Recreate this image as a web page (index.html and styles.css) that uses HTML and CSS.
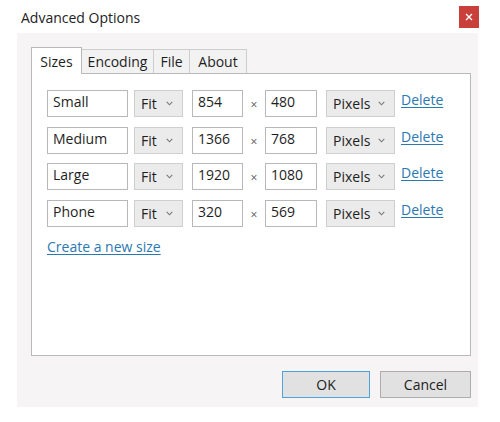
FILE: index.html
```html
<!DOCTYPE html>
<html>
<head>
<meta charset="utf-8">
<link rel="stylesheet" href="styles.css">
</head>
<body>
<div class="window">
  <div class="titlebar">
    <span class="title">Advanced Options</span>
    <span class="close"><svg width="8" height="8" viewBox="0 0 8 8"><path d="M1 1L7 7M7 1L1 7" stroke="#fff" stroke-width="1.4"/></svg></span>
  </div>
  <div class="dialog">
    <div class="tabs">
      <div class="tab tab-sizes active">Sizes</div>
      <div class="tab tab-encoding">Encoding</div>
      <div class="tab tab-file">File</div>
      <div class="tab tab-about">About</div>
    </div>
    <div class="panel">
      <div class="row">
        <div class="field f-name">Small</div>
        <div class="select s-fit"><span>Fit</span><svg class="chev" width="7" height="5" viewBox="0 0 7 5"><path d="M0.7 0.8L3.5 3.8L6.3 0.8" fill="none" stroke="#777" stroke-width="1.1"/></svg></div>
        <div class="field f-w">854</div>
        <div class="times">×</div>
        <div class="field f-h">480</div>
        <div class="select s-unit"><span>Pixels</span><svg class="chev" width="7" height="5" viewBox="0 0 7 5"><path d="M0.7 0.8L3.5 3.8L6.3 0.8" fill="none" stroke="#777" stroke-width="1.1"/></svg></div>
        <a class="link del">Delete</a>
      </div>
      <div class="row">
        <div class="field f-name">Medium</div>
        <div class="select s-fit"><span>Fit</span><svg class="chev" width="7" height="5" viewBox="0 0 7 5"><path d="M0.7 0.8L3.5 3.8L6.3 0.8" fill="none" stroke="#777" stroke-width="1.1"/></svg></div>
        <div class="field f-w">1366</div>
        <div class="times">×</div>
        <div class="field f-h">768</div>
        <div class="select s-unit"><span>Pixels</span><svg class="chev" width="7" height="5" viewBox="0 0 7 5"><path d="M0.7 0.8L3.5 3.8L6.3 0.8" fill="none" stroke="#777" stroke-width="1.1"/></svg></div>
        <a class="link del">Delete</a>
      </div>
      <div class="row">
        <div class="field f-name">Large</div>
        <div class="select s-fit"><span>Fit</span><svg class="chev" width="7" height="5" viewBox="0 0 7 5"><path d="M0.7 0.8L3.5 3.8L6.3 0.8" fill="none" stroke="#777" stroke-width="1.1"/></svg></div>
        <div class="field f-w">1920</div>
        <div class="times">×</div>
        <div class="field f-h">1080</div>
        <div class="select s-unit"><span>Pixels</span><svg class="chev" width="7" height="5" viewBox="0 0 7 5"><path d="M0.7 0.8L3.5 3.8L6.3 0.8" fill="none" stroke="#777" stroke-width="1.1"/></svg></div>
        <a class="link del">Delete</a>
      </div>
      <div class="row">
        <div class="field f-name">Phone</div>
        <div class="select s-fit"><span>Fit</span><svg class="chev" width="7" height="5" viewBox="0 0 7 5"><path d="M0.7 0.8L3.5 3.8L6.3 0.8" fill="none" stroke="#777" stroke-width="1.1"/></svg></div>
        <div class="field f-w">320</div>
        <div class="times">×</div>
        <div class="field f-h">569</div>
        <div class="select s-unit"><span>Pixels</span><svg class="chev" width="7" height="5" viewBox="0 0 7 5"><path d="M0.7 0.8L3.5 3.8L6.3 0.8" fill="none" stroke="#777" stroke-width="1.1"/></svg></div>
        <a class="link del">Delete</a>
      </div>
      <a class="link create">Create a new size</a>
    </div>
    <div class="buttons">
      <div class="btn btn-ok">OK</div>
      <div class="btn btn-cancel">Cancel</div>
    </div>
  </div>
</div>
</body>
</html>
```
FILE: styles.css
```css
html, body {
  margin: 0;
  padding: 0;
  background: #ffffff;
}
body {
  width: 500px;
  height: 422px;
  overflow: hidden;
  font-family: "Open Sans", "Noto Sans", sans-serif;
  font-size: 14px;
  color: #1e1e1e;
}
.window {
  display: flex;
  flex-direction: column;
}
.titlebar {
  height: 33px;
  display: flex;
  align-items: flex-start;
}
.title {
  padding-left: 21px;
  padding-top: 8px;
  line-height: 19px;
  font-size: 14px;
  color: #222;
}
.close {
  margin-left: auto;
  margin-right: 21px;
  margin-top: 6px;
  width: 20px;
  height: 22px;
  background: #c9403b;
  display: flex;
  align-items: center;
  justify-content: center;
}
.dialog {
  margin-left: 17px;
  width: 461px;
  height: 374px;
  box-sizing: border-box;
  padding: 14px 7px 0 14px;
  background: #f7f4f5;
  display: flex;
  flex-direction: column;
}
.tabs {
  height: 26px;
  display: flex;
  align-items: flex-end;
}
.tab {
  box-sizing: border-box;
  height: 24px;
  border: 1px solid #cdcdcd;
  border-bottom: none;
  margin-left: -1px;
  background: #f2f2f2;
  text-align: center;
  line-height: 19px;
  padding-top: 2px;
  font-size: 14px;
}
.tab-sizes { width: 51px; margin-left: 0; }
.tab-encoding { width: 73px; }
.tab-file { width: 37px; }
.tab-about { width: 58px; }
.tab.active {
  height: 27px;
  margin-bottom: -1px;
  background: #ffffff;
  border-color: #b9b9b9;
  padding-top: 4px;
  position: relative;
  z-index: 1;
}
.panel {
  box-sizing: border-box;
  height: 283px;
  width: 440px;
  border: 1px solid #b9b9b9;
  background: #ffffff;
  padding: 16px 15px 0 15px;
  display: flex;
  flex-direction: column;
  align-items: flex-start;
  gap: 9.5px;
}
.row {
  display: flex;
  align-items: flex-start;
  height: 27px;
}
.field {
  box-sizing: border-box;
  height: 27px;
  border: 1px solid #b8b8b8;
  background: #fff;
  padding: 2px 0 0 5px;
  line-height: 18px;
  white-space: nowrap;
}
.f-name { width: 81px; margin-right: 6px; }
.f-w { width: 51px; }
.f-h { width: 52px; margin-right: 9px; }
.select {
  box-sizing: border-box;
  height: 27px;
  border: 1px solid #cfcfcf;
  background: #ebebeb;
  display: flex;
  align-items: flex-start;
  padding: 4px 0 0 6px;
  line-height: 18px;
}
.select .chev {
  margin-left: auto;
  margin-right: 9px;
  margin-top: 6px;
}
.s-fit { width: 49px; margin-right: 9px; }
.s-unit { width: 69px; margin-right: 6px; }
.times {
  width: 22px;
  text-align: center;
  font-size: 12px;
  color: #555;
  padding-top: 7px;
  line-height: 16px;
}
.link {
  color: #2c78b0;
  text-decoration: underline;
  text-underline-offset: 2px;
  line-height: 19px;
}
.del {
  padding-top: 0px;
}
.create {
  margin-top: 0.5px;
}
.buttons {
  display: flex;
  justify-content: flex-end;
  gap: 10px;
  margin-top: 15px;
  width: 440px;
}
.btn {
  box-sizing: border-box;
  height: 27px;
  display: flex;
  align-items: center;
  justify-content: center;
  background: #e1e1e1;
  border: 1px solid #adadad;
  font-size: 14px;
  color: #222;
}
.btn-ok {
  width: 88px;
  border-color: #4da3d8;
}
.btn-cancel {
  width: 91px;
}
```
